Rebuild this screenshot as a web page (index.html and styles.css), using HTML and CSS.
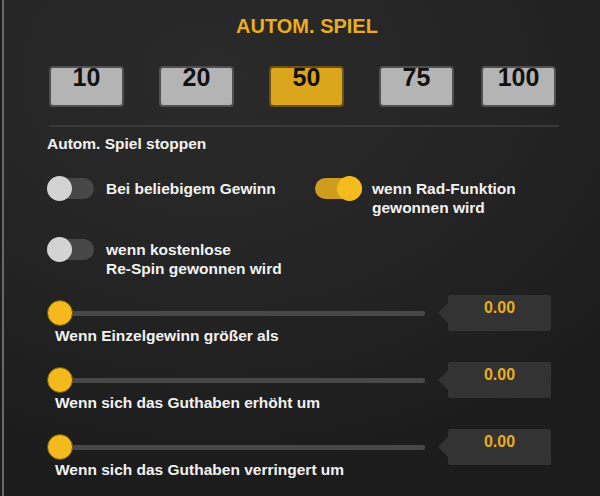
FILE: index.html
```html
<!DOCTYPE html>
<html lang="de">
<head>
<meta charset="utf-8">
<title>Autom. Spiel</title>
<link rel="stylesheet" href="styles.css">
</head>
<body>
<div class="panel">
  <h1 class="title">AUTOM. SPIEL</h1>
  <div class="counts">
    <button class="count">10</button>
    <button class="count">20</button>
    <button class="count active">50</button>
    <button class="count">75</button>
    <button class="count last">100</button>
  </div>
  <div class="divider"></div>
  <div class="section-label">Autom. Spiel stoppen</div>
  <div class="toggles">
    <div class="trow">
      <span class="toggle"><span class="knob"></span></span>
      <span class="tlabel">Bei beliebigem Gewinn</span>
    </div>
    <div class="trow right">
      <span class="toggle on"><span class="knob"></span></span>
      <span class="tlabel">wenn Rad-Funktion<br>gewonnen wird</span>
    </div>
    <div class="trow">
      <span class="toggle"><span class="knob"></span></span>
      <span class="tlabel">wenn kostenlose<br>Re-Spin gewonnen wird</span>
    </div>
  </div>
  <div class="sliders">
    <div class="srow">
      <div class="sleft">
        <div class="track-wrap"><div class="track"></div><span class="sknob"></span></div>
        <div class="slabel">Wenn Einzelgewinn größer als</div>
      </div>
      <div class="value">0.00</div>
    </div>
    <div class="srow">
      <div class="sleft">
        <div class="track-wrap"><div class="track"></div><span class="sknob"></span></div>
        <div class="slabel">Wenn sich das Guthaben erhöht um</div>
      </div>
      <div class="value">0.00</div>
    </div>
    <div class="srow">
      <div class="sleft">
        <div class="track-wrap"><div class="track"></div><span class="sknob"></span></div>
        <div class="slabel">Wenn sich das Guthaben verringert um</div>
      </div>
      <div class="value">0.00</div>
    </div>
  </div>
</div>
</body>
</html>
```
FILE: styles.css
```css
* { box-sizing: border-box; }
html, body { margin: 0; padding: 0; background: #1c1c1c; }
body {
  width: 600px;
  height: 496px;
  overflow: hidden;
  font-family: "Liberation Sans", Arial, sans-serif;
  font-weight: bold;
  color: #f2f2f2;
}
.panel {
  width: 598px;
  height: 496px;
  margin-left: 2px;
  border-left: 2px solid #6a6a6a;
  background: radial-gradient(ellipse 90% 80% at 35% 15%, #2a2a2a 0%, #252525 50%, #1c1c1c 100%);
  padding: 14px 0 0 43px;
}
.title {
  margin: 0 0 28px 0;
  width: 520px;
  text-align: center;
  font-size: 20px;
  line-height: 24px;
  color: #e9ad1f;
  font-weight: bold;
}
.counts {
  display: flex;
  width: 507px;
  margin-left: 2px;
}
.count {
  flex: none;
  width: 75px;
  height: 41px;
  margin-right: 35px;
  padding: 0;
  border: 2px solid #505050;
  border-radius: 4px;
  background: #b4b4b4;
  color: #111;
  font-family: "Liberation Sans", Arial, sans-serif;
  font-weight: bold;
  font-size: 25px;
  line-height: 19px;
  display: flex;
  justify-content: center;
  align-items: flex-start;
}
.count.active { background: #dba61c; border-color: #6a5216; }
.count:nth-child(4) { margin-right: 0; }
.count.last { margin-left: auto; margin-right: 0; }
.divider {
  width: 510px;
  height: 2px;
  margin: 18px 0 0 2px;
  background: #393939;
}
.section-label {
  margin-top: 8px;
  font-size: 15.5px;
  line-height: 18px;
}
.toggles {
  display: grid;
  grid-template-columns: 268px 1fr;
  row-gap: 20px;
  margin-top: 23px;
}
.trow { display: flex; align-items: flex-start; }
.toggle {
  position: relative;
  width: 47px;
  height: 25px;
  flex: none;
}
.toggle::before {
  content: "";
  position: absolute;
  left: 0; right: 0; top: 2px; height: 21px;
  border-radius: 11px;
  background: #474747;
  filter: blur(0.6px);
}
.knob {
  position: absolute;
  left: 0; top: 0;
  width: 25px; height: 25px;
  border-radius: 50%;
  background: #d3d3d3;
  filter: blur(0.6px);
}
.toggle.on::before { background: #cf9d1d; }
.toggle.on .knob { left: auto; right: 0; background: #f4bb1e; }
.tlabel {
  margin-left: 12px;
  margin-top: 3px;
  font-size: 15.5px;
  line-height: 19px;
}
.trow.right .tlabel { margin-left: 10px; }
.sliders { margin-top: 17px; }
.srow {
  display: flex;
  align-items: flex-start;
  margin-bottom: 17px;
}
.sleft { width: 391px; flex: none; }
.track-wrap {
  position: relative;
  height: 36px;
  display: flex;
  align-items: center;
}
.track {
  width: 376px;
  height: 5px;
  margin-left: 2px;
  border-radius: 2px;
  background: #484848;
}
.sknob {
  position: absolute;
  left: 0; top: 5px;
  width: 26px; height: 26px;
  border-radius: 50%;
  background: #f4b91c;
  border: 1px solid #6b5210;
}
.slabel {
  margin-top: -4px;
  margin-left: 8px;
  font-size: 15.5px;
  line-height: 18px;
  white-space: nowrap;
}
.value {
  position: relative;
  width: 103px;
  height: 36px;
  margin-left: 10px;
  border-radius: 2px;
  background: #333333;
  color: #e9ad1f;
  text-align: center;
  font-size: 16px;
  line-height: 18px;
  padding-top: 4px;
}
.value::before {
  content: "";
  position: absolute;
  left: -10px; top: 8px;
  border-right: 10px solid #333333;
  border-top: 10px solid transparent;
  border-bottom: 10px solid transparent;
}
```
